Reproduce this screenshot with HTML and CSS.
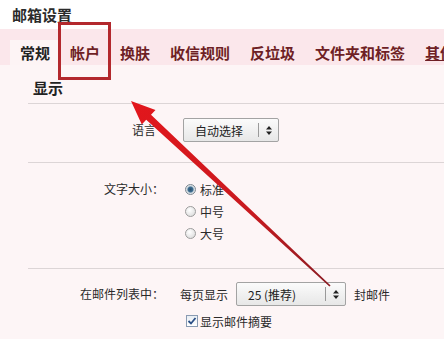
FILE: index.html
```html
<!DOCTYPE html>
<html lang="zh-CN">
<head>
  <meta charset="UTF-8">
  <meta name="viewport" content="width=device-width, initial-scale=1.0">
  <title>邮箱设置</title>
  <link rel="stylesheet" href="styles.css">
</head>
<body>
  <div class="settings">
    <h1 class="title">邮箱设置</h1>

    <div class="tabs">
      <a class="tab active" href="#">常规</a>
      <a class="tab" href="#">帐户</a>
      <a class="tab" href="#">换肤</a>
      <a class="tab" href="#">收信规则</a>
      <a class="tab" href="#">反垃圾</a>
      <a class="tab" href="#">文件夹和标签</a>
      <a class="tab more" href="#">其他</a>
    </div>

    <div class="panel">
      <h2 class="panel-title">显示</h2>

      <!-- 语言 -->
      <div class="section lang">
        <div class="row">
          <span class="label label-short">语言</span>
          <div class="control">
            <div class="select select-lang">
              <span class="select-text">自动选择</span>
              <span class="select-btn">
                <svg width="6" height="9" viewBox="0 0 6 9"><path d="M3 0 L6 3.5 H0 Z M0 5.5 H6 L3 9 Z" fill="#222"/></svg>
              </span>
            </div>
          </div>
        </div>
      </div>

      <!-- 文字大小 -->
      <div class="section fontsize">
        <div class="row">
          <span class="label label-radio">文字大小：</span>
          <div class="control">
            <div class="option"><span class="radio checked"></span>标准</div>
            <div class="option"><span class="radio"></span>中号</div>
            <div class="option"><span class="radio"></span>大号</div>
          </div>
        </div>
      </div>

      <!-- 邮件列表 -->
      <div class="section maillist">
        <div class="row">
          <span class="label">在邮件列表中：</span>
          <div class="control">
            <div class="inline">
              每页显示
              <div class="select select-count">
                <span class="select-text">25 (推荐)</span>
                <span class="select-btn">
                  <svg width="6" height="9" viewBox="0 0 6 9"><path d="M3 0 L6 3.5 H0 Z M0 5.5 H6 L3 9 Z" fill="#222"/></svg>
                </span>
              </div>
              封邮件
            </div>
            <div class="option check-option">
              <span class="checkbox">
                <svg width="10" height="10" viewBox="0 0 10 10"><path d="M1.5 5 L4 7.5 L8.5 2" fill="none" stroke="#2b4f86" stroke-width="1.8"/></svg>
              </span>显示邮件摘要
            </div>
          </div>
        </div>
      </div>
    </div>

    <!-- annotation: red box around 帐户 and arrow -->
    <div class="mark"></div>
    <svg class="arrow" width="444" height="339" viewBox="0 0 444 339">
      <defs>
        <linearGradient id="arrowFill" x1="131" y1="101" x2="330" y2="286" gradientUnits="userSpaceOnUse">
          <stop offset="0" stop-color="#e3161c"/>
          <stop offset="0.6" stop-color="#c81a1f"/>
          <stop offset="1" stop-color="#8a1b22"/>
        </linearGradient>
      </defs>
      <polygon fill="url(#arrowFill)"
        points="131,101 155.5,110 151,114.8 330.6,285.4 329.4,286.6 146.2,119.8 141.8,124.6"/>
    </svg>
  </div>
</body>
</html>
```

FILE: styles.css
```css
* {
  margin: 0;
  padding: 0;
  box-sizing: border-box;
}

body {
  font-family: "Noto Sans CJK SC", "Noto Sans", sans-serif;
  background: #fff;
  color: #2a2a2a;
  overflow: hidden;
}

.settings {
  position: relative;
  width: 444px;
  height: 339px;
  overflow: hidden;
}

.title {
  height: 29px;
  line-height: 29px;
  padding-left: 12px;
  font-size: 15px;
  font-weight: bold;
  color: #2b2b2b;
}

/* Tabs */
.tabs {
  display: flex;
  height: 36px;
  padding: 11px 0 0 10px;
  background: #fbe7eb;
  white-space: nowrap;
  overflow: hidden;
}

.tab {
  flex: none;
  height: 25px;
  line-height: 25px;
  padding: 0 10px;
  font-size: 15px;
  font-weight: bold;
  color: #6e1f25;
  text-decoration: none;
}

.tab.active {
  background: #fdf4f5;
  color: #222;
}

.tab.more {
  text-decoration: underline;
}

/* Panel */
.panel {
  background: #fdf5f6;
  height: 274px;
}

.panel-title {
  padding: 8px 0 0 33px;
  height: 38px;
  line-height: 30px;
  font-size: 15px;
  font-weight: bold;
  color: #222;
}

.section {
  margin-left: 28px;
  border-top: 1px solid #dcd5d6;
  font-size: 12px;
}

.section.lang {
  padding: 14px 0 20px;
}

.section.fontsize {
  padding: 15px 0 24px;
}

.section.maillist {
  padding: 13px 0 0;
}

.row {
  display: grid;
  grid-template-columns: 136px 1fr;
  column-gap: 18px;
  align-items: start;
}

.label {
  text-align: right;
  line-height: 24px;
  color: #2a2a2a;
}

.label-short {
  padding-right: 8px;
}

.label-radio {
  line-height: 22px;
}

.control {
  display: flex;
  flex-direction: column;
}

/* Fake select */
.select {
  display: flex;
  align-items: center;
  height: 24px;
  border: 1px solid #a3a3a3;
  border-radius: 2px;
  background: linear-gradient(#fbfbfb, #e7e7e7);
  color: #222;
}

.select-text {
  flex: 1;
  padding-left: 11px;
}

.select-btn {
  display: flex;
  align-items: center;
  justify-content: center;
  width: 20px;
  height: 14px;
  border-left: 1px solid #9a9a9a;
}

.select-lang {
  width: 96px;
  margin-left: 1px;
}

.select-count {
  width: 110px;
  margin: 0 8px;
}

.inline {
  display: flex;
  align-items: center;
  height: 24px;
  margin-left: -2px;
}

/* Radios and checkbox */
.option {
  display: flex;
  align-items: center;
  height: 22px;
  padding-left: 3px;
}

.radio {
  width: 11px;
  height: 11px;
  margin-right: 4px;
  border: 1px solid #9c9c9c;
  border-radius: 50%;
  background: radial-gradient(circle at 40% 35%, #fff, #d6d6d6);
}

.radio.checked {
  border-color: #7c8790;
  background: radial-gradient(circle at 50% 50%, #2a4e6c 0, #3f6f92 2.5px, #c9d4dc 3.5px, #eef1f3 5px);
}

.check-option {
  margin-top: 4px;
  padding-left: 4px;
}

.checkbox {
  display: flex;
  align-items: center;
  justify-content: center;
  width: 12px;
  height: 12px;
  margin-right: 2px;
  border: 1px solid #8a9bb2;
  background: linear-gradient(#e9eef4, #fff);
}

/* Annotation */
.mark {
  position: absolute;
  left: 58px;
  top: 22px;
  width: 53px;
  height: 58px;
  border: 3px solid #b3282d;
}

.arrow {
  position: absolute;
  left: 0;
  top: 0;
  pointer-events: none;
}
```
